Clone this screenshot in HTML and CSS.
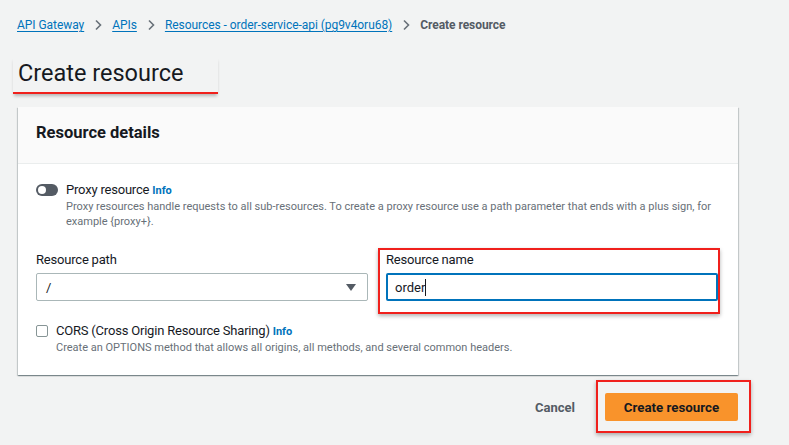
FILE: index.html
```html
<!DOCTYPE html>
<html lang="en">
<head>
<meta charset="utf-8">
<title>Create resource</title>
<link rel="stylesheet" href="styles.css">
</head>
<body>
<nav class="crumbs">
  <a href="#" class="crumb-link">API Gateway</a>
  <svg class="chev" viewBox="0 0 8 12" width="8" height="12"><path d="M2 1.5 L6.5 6 L2 10.5" fill="none" stroke="#687078" stroke-width="1.6"/></svg>
  <a href="#" class="crumb-link">APIs</a>
  <svg class="chev" viewBox="0 0 8 12" width="8" height="12"><path d="M2 1.5 L6.5 6 L2 10.5" fill="none" stroke="#687078" stroke-width="1.6"/></svg>
  <a href="#" class="crumb-link">Resources - order-service-api (pg9v4oru68)</a>
  <svg class="chev" viewBox="0 0 8 12" width="8" height="12"><path d="M2 1.5 L6.5 6 L2 10.5" fill="none" stroke="#687078" stroke-width="1.6"/></svg>
  <span class="crumb-current">Create resource</span>
</nav>

<header class="page-head">
  <h1 class="title">Create resource</h1>
</header>

<section class="card">
  <div class="card-head">
    <h2 class="card-title">Resource details</h2>
  </div>
  <div class="card-body">
    <div class="toggle-row">
      <span class="toggle"><span class="knob"></span></span>
      <div class="toggle-text">
        <div class="opt-label">Proxy resource <a href="#" class="info">Info</a></div>
        <p class="opt-desc">Proxy resources handle requests to all sub-resources. To create a proxy resource use a path parameter that ends with a plus sign, for example {proxy+}.</p>
      </div>
    </div>

    <div class="fields">
      <div class="field">
        <label class="field-label">Resource path</label>
        <div class="select">
          <span class="select-value">/</span>
          <svg class="caret" viewBox="0 0 10 7" width="10" height="7"><path d="M0 0 H10 L5 7 Z" fill="#545b64"/></svg>
        </div>
      </div>
      <div class="field highlighted">
        <label class="field-label">Resource name</label>
        <div class="input focused"><span class="input-value">order</span><span class="cursor"></span></div>
      </div>
    </div>

    <div class="check-row">
      <span class="checkbox"></span>
      <div class="toggle-text">
        <div class="opt-label">CORS (Cross Origin Resource Sharing) <a href="#" class="info">Info</a></div>
        <p class="opt-desc">Create an OPTIONS method that allows all origins, all methods, and several common headers.</p>
      </div>
    </div>
  </div>
</section>

<div class="actions">
  <button class="btn-link">Cancel</button>
  <button class="btn-primary">Create resource</button>
</div>
</body>
</html>
```

FILE: styles.css
```css
* { box-sizing: border-box; }
body {
  margin: 0;
  background: #f2f3f3;
  font-family: Roboto, "Liberation Sans", sans-serif;
  color: #16191f;
  width: 789px;
  height: 445px;
  overflow: hidden;
}
.crumbs {
  display: flex;
  align-items: center;
  gap: 10px;
  padding: 16px 0 0 17px;
  height: 34px;
  font-size: 12px;
  letter-spacing: -0.05px;
  line-height: 18px;
}
.crumb-link { color: #0073bb; text-decoration: underline; text-underline-offset: 2px; }
.chev { display: block; }
.crumb-current { color: #545b64; font-weight: 700; }

.page-head { padding: 23px 0 0 13px; height: 73px; }
.title {
  display: inline-block;
  margin: 0;
  font-size: 23.5px;
  line-height: 32px;
  font-weight: 400;
  color: #16191f;
  padding: 0 35px 3px 5px;
  border-bottom: 2px solid #f0201c;
  box-shadow: 0 3px 3px -1px rgba(0,0,0,0.25);
}

.card {
  margin: 0 51px 0 18px;
  background: #fff;
  box-shadow: 0 1px 1px 0 rgba(0,28,36,0.3), 1px 1px 1px 0 rgba(0,28,36,0.15), -1px 1px 1px 0 rgba(0,28,36,0.15);
}
.card-head {
  height: 57px;
  background: #fafafa;
  border-bottom: 1px solid #eaeded;
  padding: 14px 18px 0;
}
.card-title { margin: 0; font-size: 16.5px; line-height: 24px; font-weight: 700; }
.card-body { padding: 18px 20px 20px 18px; }

.toggle-row, .check-row { display: flex; gap: 8px; align-items: flex-start; }
.toggle {
  margin-top: 2px;
  width: 22px; height: 12px;
  border-radius: 6px;
  background: #545b64;
  position: relative;
  flex: none;
}
.knob {
  position: absolute; left: 2px; top: 2px;
  width: 8px; height: 8px; border-radius: 50%; background: #fff;
}
.opt-label { font-size: 13px; letter-spacing: -0.2px; line-height: 16px; }
.info { color: #0073bb; font-weight: 700; font-size: 11px; letter-spacing: 0; text-decoration: none; }
.opt-desc { margin: 0; font-size: 11px; line-height: 15px; color: #687078; }

.fields {
  display: grid;
  grid-template-columns: 1fr 1fr;
  gap: 18px;
  margin-top: 21px;
}
.field { position: relative; }
.field-label { display: block; font-size: 13px; letter-spacing: -0.2px; line-height: 20px; margin-bottom: 3px; }
.select, .input {
  height: 28px;
  border: 1px solid #aab7b8;
  border-radius: 2px;
  display: flex;
  align-items: center;
  padding: 0 10px 0 9px;
  font-size: 13px;
}
.select { justify-content: space-between; }
.caret { display: block; margin-right: 1px; }
.input.focused { border: 2px solid #0073bb; padding-left: 7px; }
.cursor { display: inline-block; width: 1px; height: 17px; background: #16191f; margin-left: 0; }
.highlighted::after {
  content: "";
  position: absolute;
  top: -2px; left: -8px; right: -2px; bottom: -13px;
  border: 2px solid #f0201c;
  box-shadow: 0 2px 4px rgba(0,0,0,0.3);
  pointer-events: none;
}

.check-row { margin-top: 22px; }
.checkbox {
  margin-top: 2px;
  width: 12px; height: 12px;
  border: 1px solid #879596;
  border-radius: 2px;
  background: #fff;
  flex: none;
}

.actions {
  display: flex;
  justify-content: flex-end;
  align-items: center;
  gap: 30px;
  margin: 18px 51px 0 0;
}
.btn-link {
  border: 0; background: none;
  font: 700 13px Roboto, "Liberation Sans", sans-serif;
  color: #545b64;
  padding: 0;
}
.btn-primary {
  position: relative;
  height: 28px;
  width: 133px;
  border: 0;
  border-radius: 2px;
  background: #f9932b;
  color: #16191f;
  font: 700 13.3px Roboto, "Liberation Sans", sans-serif;
}
.btn-primary::after {
  content: "";
  position: absolute;
  top: -13px; left: -9px; right: -13px; bottom: -12px;
  border: 2px solid #f0201c;
  box-shadow: 0 2px 4px rgba(0,0,0,0.3);
  pointer-events: none;
}
```
